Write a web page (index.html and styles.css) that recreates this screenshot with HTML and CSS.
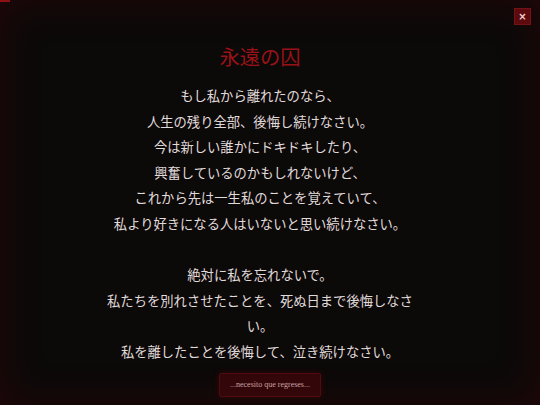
FILE: index.html
```html
<!DOCTYPE html>
<html lang="ja">
<head>
<meta charset="utf-8">
<title>永遠の囚</title>
<link rel="stylesheet" href="styles.css">
</head>
<body>
<div class="progress"></div>
<button class="close" aria-label="close">×</button>
<main class="modal">
  <section class="story">
    <h1 class="title">永遠の囚</h1>
    <p class="poem">もし私から離れたのなら、<br>人生の残り全部、後悔し続けなさい。<br>今は新しい誰かにドキドキしたり、<br>興奮しているのかもしれないけど、<br>これから先は一生私のことを覚えていて、<br>私より好きになる人はいないと思い続けなさい。<br><br>絶対に私を忘れないで。<br>私たちを別れさせたことを、死ぬ日まで後悔しなさい。<br>私を離したことを後悔して、泣き続けなさい。</p>
  </section>
  <button class="cta">...necesito que regreses...</button>
</main>
</body>
</html>
```
FILE: styles.css
```css
html, body {
  margin: 0;
  padding: 0;
  width: 540px;
  height: 405px;
  overflow: hidden;
}
body {
  background: #0c0909;
  box-shadow: inset 0 0 40px rgba(90, 0, 6, 0.3);
  font-family: "Liberation Serif", "Noto Sans CJK JP", serif;
  position: relative;
}
.progress {
  position: absolute;
  left: 0;
  top: 0;
  width: 10px;
  height: 2px;
  background: #8c1014;
}
.close {
  position: absolute;
  top: 8px;
  left: 514px;
  width: 17px;
  height: 17px;
  padding: 0;
  margin: 0;
  background: #5c0a0e;
  border: 1px solid #741216;
  color: #f4d2d2;
  font-family: "DejaVu Sans", sans-serif;
  font-weight: bold;
  font-size: 10px;
  line-height: 15px;
  text-align: center;
}
.modal {
  display: flex;
  flex-direction: column;
  align-items: center;
  padding-top: 41px;
}
.story {
  width: 312px;
  margin-right: 20px;
  text-align: center;
}
.title {
  margin: 0;
  font-family: "Noto Sans CJK JP", serif;
  font-weight: 400;
  font-size: 20.3px;
  line-height: 30px;
  color: #9a1217;
}
.poem {
  margin: 12px 0 0;
  font-family: "Noto Sans CJK JP", serif;
  font-weight: 400;
  font-size: 13.3px;
  line-height: 25.6px;
  color: #e0dbdb;
}
.cta {
  margin-top: 8px;
  width: 102px;
  height: 24px;
  padding: 0;
  background: #33060a;
  border: 1px solid #4e0b10;
  border-radius: 2px;
  box-shadow: 0 0 6px rgba(120, 0, 10, 0.35);
  color: #c9a2a2;
  font-family: "Liberation Serif", serif;
  font-size: 8px;
  line-height: 22px;
  text-align: center;
}
```
